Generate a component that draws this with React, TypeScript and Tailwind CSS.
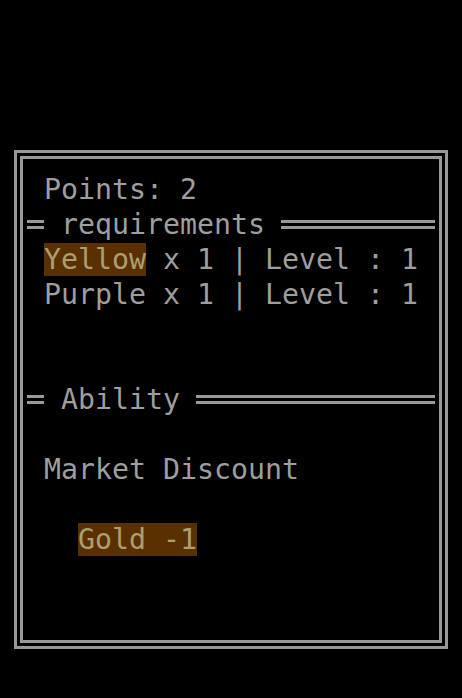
import React from 'react';

const mono = { fontFamily: '"DejaVu Sans Mono", "Liberation Mono", monospace' };

function Row({ children }: { children?: React.ReactNode }) {
  return <div className="h-[35px] whitespace-pre leading-[35px]">{children}</div>;
}

function Heading({ title }: { title: string }) {
  return (
    <div className="flex h-[35px] items-center whitespace-pre leading-[35px]">
      <div className="h-[9px] w-[17px] border-y-[3px] border-[#999999]" />
      <span className="ml-[17px]">{title}</span>
      <div className="ml-[16px] h-[9px] flex-1 border-y-[3px] border-[#999999]" />
    </div>
  );
}

function Mark({ children }: { children: React.ReactNode }) {
  return <span className="bg-[#5a3000] text-[#aa9f72]">{children}</span>;
}

export default function App() {
  return (
    <div className="min-h-[698px] bg-black pl-[14px] pt-[150px]" style={mono}>
      <div className="h-[499px] w-[434px] border-[3px] border-[#999999] p-[3px]">
        <div className="h-full border-[3px] border-[#999999] px-[4px] pt-[13px] text-[28.24px] text-[#9e9e9e]">
          <Row>{' Points: 2'}</Row>
          <Heading title="requirements" />
          <Row>
            <span>{' '}</span>
            <Mark>Yellow</Mark>
            <span>{' x 1 | Level : 1'}</span>
          </Row>
          <Row>{' Purple x 1 | Level : 1'}</Row>
          <Row />
          <Row />
          <Heading title="Ability" />
          <Row />
          <Row>{' Market Discount'}</Row>
          <Row />
          <Row>
            <span>{'   '}</span>
            <Mark>Gold -1</Mark>
          </Row>
        </div>
      </div>
    </div>
  );
}
